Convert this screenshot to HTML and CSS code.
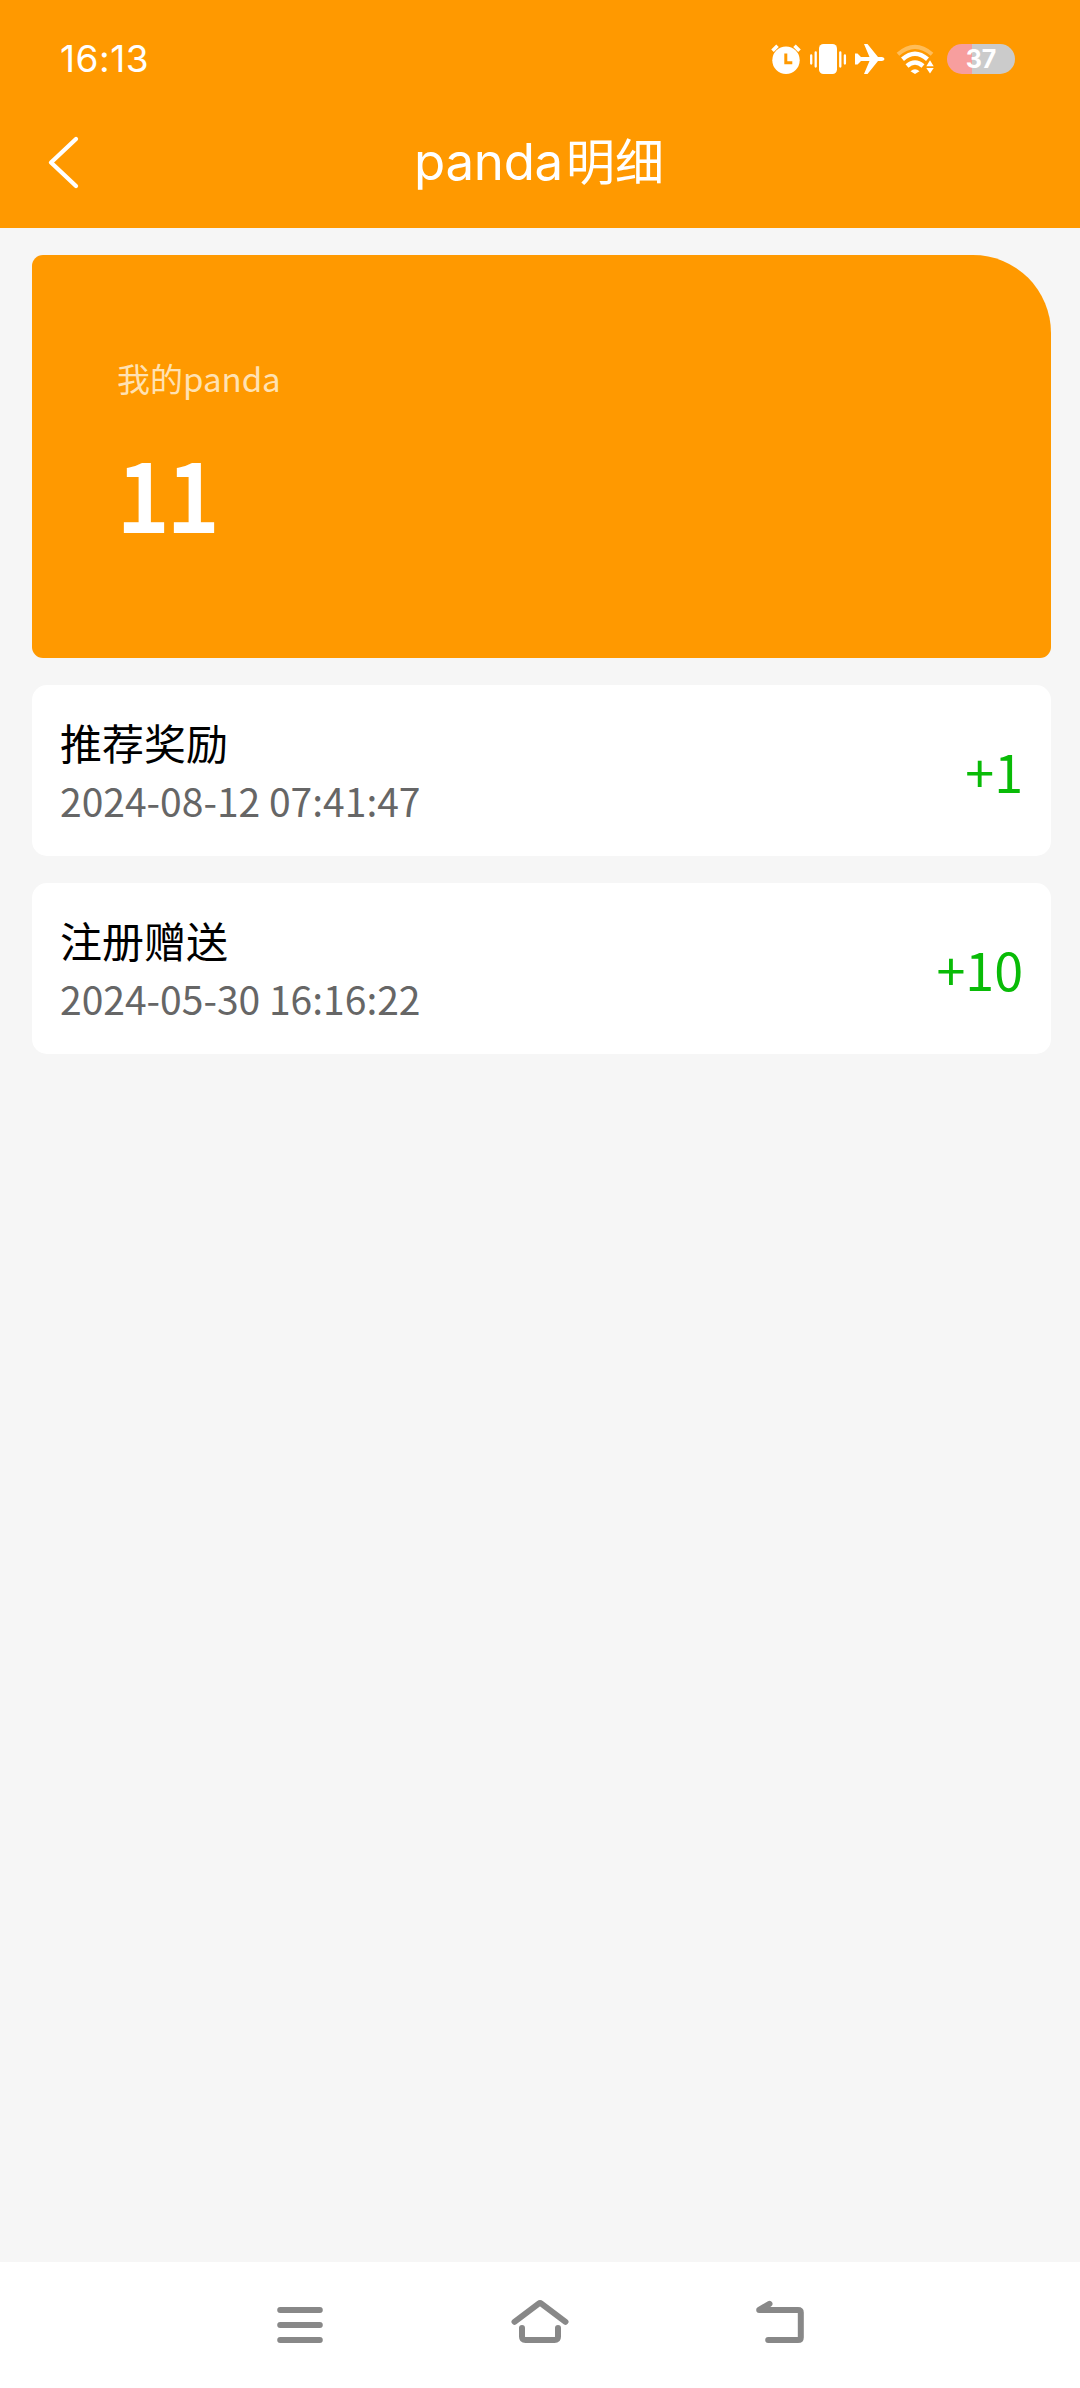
FILE: index.html
```html
<!DOCTYPE html>
<html lang="zh-CN">
<head>
<meta charset="utf-8">
<title>panda明细</title>
<link rel="stylesheet" href="styles.css">
</head>
<body>
<header class="header">
  <div class="status">
    <span class="clock">16:13</span>
    <svg class="status-icons" width="168" height="34" viewBox="770 42 168 34" fill="#fff">
      <circle cx="787" cy="60.3" r="13.7"/>
      <path d="M773.5 50.8l5-5M795.500 45.8l5 5" stroke="#fff" stroke-width="3.600"/>
      <path d="M786.8 53.5v9.2h6.5" fill="none" stroke="#ff9900" stroke-width="3"/>
      <rect x="820" y="44" width="18" height="30" rx="4.5"/>
      <path d="M812.2 55.5v8M816.7 52.5v14M841.3 52.5v14M845.9 55.5v8" stroke="#fff" stroke-width="2.3" stroke-linecap="round"/>
      <path d="M856 53.5h2.5l3.5 3.5h8.500l-5.500-13h3.500l10.500 13H883q2.500.4 2.500 2t-2.500 2h-4L868.500 74H865l5.500-13H862l-3.500 3.500H856z"/>
      <path d="M899 54.300Q916 39.500 933 54.300" fill="none" stroke="#ffbd59" stroke-width="4"/>
      <path d="M903.500 59.200Q916 48.300 928.500 59.200M908 66Q916 59 924 66" fill="none" stroke="#fff" stroke-width="4.500"/>
      <path d="M911.500 71.300q4.500-4 9 0L916 74zM927.300 66.300l3.700-6 3.700 6zM927.300 68l3.700 5.500 3.700-5.500z"/>
    </svg>
    <span class="battery">37</span>
  </div>
  <div class="navbar">
    <svg class="back" width="40" height="60" viewBox="44 132 40 60"><path d="M76 139L51 162.500L76 186" fill="none" stroke="#fff" stroke-width="4.300" stroke-linecap="round" stroke-linejoin="round"/></svg>
    <h1 class="title"><span class="latin">panda</span>明细</h1>
  </div>
</header>
<main class="content">
  <section class="balance">
    <p class="balance-label">我的panda</p>
    <p class="balance-value">11</p>
  </section>
  <article class="record">
    <div class="record-info">
      <h2 class="record-name">推荐奖励</h2>
      <p class="record-time">2024-08-12 07:41:47</p>
    </div>
    <span class="amount">+1</span>
  </article>
  <article class="record">
    <div class="record-info">
      <h2 class="record-name">注册赠送</h2>
      <p class="record-time">2024-05-30 16:16:22</p>
    </div>
    <span class="amount">+10</span>
  </article>
</main>
<nav class="system-nav">
  <svg width="60" height="60" viewBox="270 2295 60 60"><path d="M280.200 2310h39.600M280.200 2325h39.600M280.200 2340h39.600"/></svg>
  <svg width="60" height="60" viewBox="510 2295 60 60"><path d="M514.500 2321.800L538.700 2303.600Q540 2302.600 541.300 2303.600L565.500 2321.800M522 2328v8.500q0 3.500 3.500 3.500h29q3.500 0 3.500-3.500V2328"/></svg>
  <svg width="60" height="60" viewBox="750 2295 60 60"><path d="M769.500 2303.800l-10.300 6v.2H798q2.800 0 2.800 2.500v25q0 2.500-2.800 2.500H768.200"/></svg>
</nav>
</body>
</html>
```
FILE: styles.css
```css
* { box-sizing: border-box; }
body {
  margin: 0;
  height: 2388px;
  display: flex;
  flex-direction: column;
  background: #f6f6f6;
  font-family: "Noto Sans CJK SC", sans-serif;
}
h1, h2, p { margin: 0; font-weight: 400; }
svg { display: block; flex: none; }
.header { height: 228px; background: #ff9900; color: #fff; }
.status {
  height: 98px;
  padding: 20px 65px 0 60px;
  display: flex;
  align-items: center;
}
.clock {
  flex: 1;
  font: 400 37px/44px Inter, sans-serif;
  letter-spacing: 0.5px;
}
.status-icons { margin-right: 10px; }
.battery {
  width: 68px;
  height: 30px;
  border-radius: 15px;
  background: linear-gradient(90deg, #f79e9e 25px, #cbcbcb 25px);
  font: 700 25px/30px Inter, sans-serif;
  text-align: center;
}
.navbar {
  height: 130px;
  padding: 0 44px 2px;
  display: grid;
  grid-template-columns: 40px 1fr 40px;
  align-items: center;
}
.title {
  padding: 0 2px 3px 0;
  text-align: center;
  font-size: 49px;
  line-height: 72px;
}
.latin {
  margin-right: 3px;
  font-family: Inter, sans-serif;
  font-size: 51px;
  font-weight: 400;
  letter-spacing: -0.3px;
}
.content {
  flex: 1;
  padding: 27px 29px 0 32px;
  display: flex;
  flex-direction: column;
  gap: 27px;
}
.balance {
  height: 403px;
  padding: 98px 85px;
  border-radius: 11px 78px 11px 11px;
  background: #ff9900;
  color: #fff;
}
.balance-label { font-size: 33px; line-height: 50px; color: #ffe2b3; }
.balance-value {
  margin: 23px 0 0 1px;
  font-size: 90px;
  line-height: 132px;
  -webkit-text-stroke: 4px #fff;
}
.record {
  height: 171px;
  padding: 0 28px;
  display: flex;
  align-items: center;
  justify-content: space-between;
  border-radius: 15px;
  background: #fff;
}
.record-info { padding-bottom: 1px; }
.record-name { font-size: 42px; line-height: 60px; color: #000; }
.record-time { font-size: 39px; line-height: 56px; color: #666; }
.amount { font-size: 52px; line-height: 76px; color: #09bb07; }
.system-nav {
  height: 126px;
  padding: 0 270px;
  display: flex;
  align-items: center;
  justify-content: space-between;
  background: #fff;
}
.system-nav path {
  fill: none;
  stroke: #888;
  stroke-width: 6px;
  stroke-linecap: round;
  stroke-linejoin: round;
}
```
